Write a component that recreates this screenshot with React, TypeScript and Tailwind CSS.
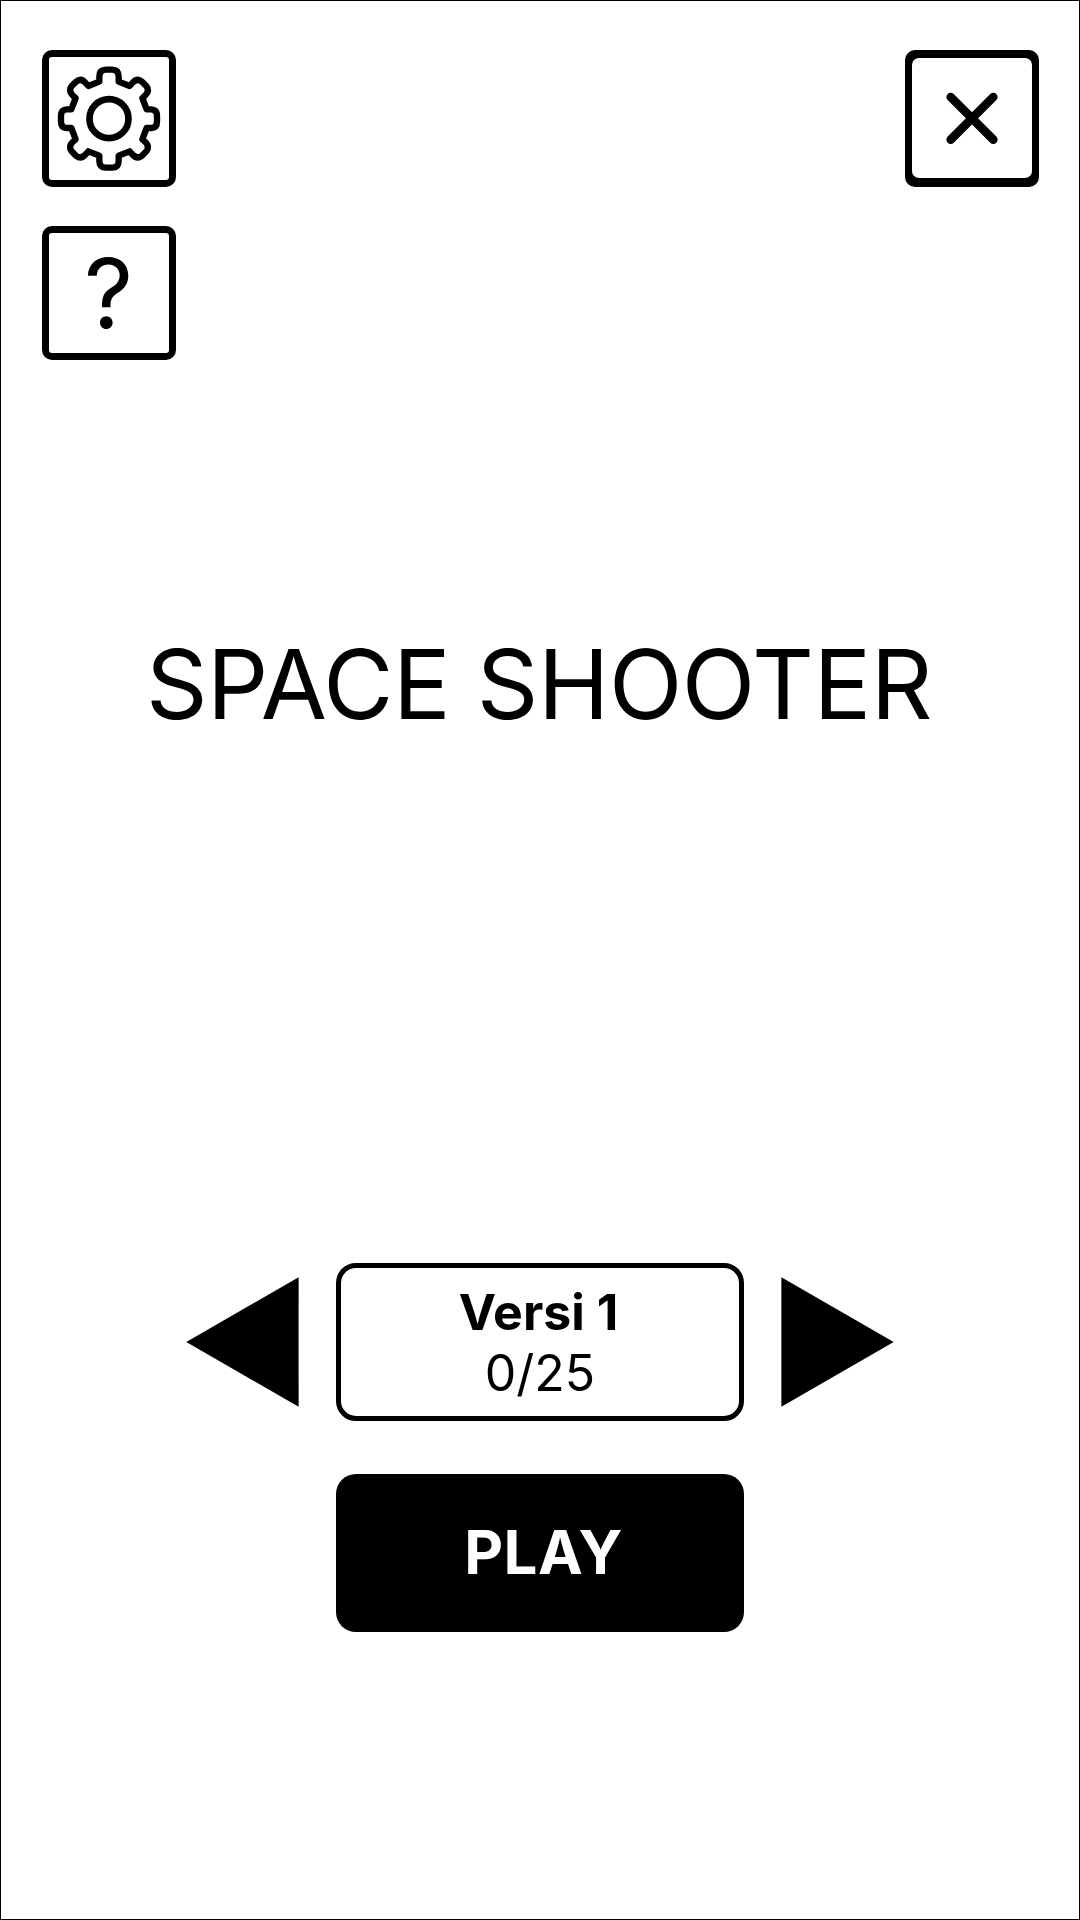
import type { ReactNode } from "react";

function GearIcon() {
  return (
    <svg
      className="h-[106px] w-[106px] shrink-0"
      viewBox="-159 -158 318 318"
      fill="none"
      stroke="black"
      strokeWidth="19"
      strokeLinejoin="round"
    >
      <circle r="58.5" strokeWidth="20" />
      <path d="M-29 -111V-126Q-29 -147 -9 -147H9Q29 -147 29 -126V-111L62 -98L70 -107Q84 -123 99 -111L112 -98Q123 -84 109 -70L100 -62L113 -28H126Q144 -27 144 -9V9Q144 27 126 28H113L100 62L109 70Q123 84 112 98L99 111Q84 123 70 107L62 98L29 111V126Q29 147 9 147H-9Q-29 147 -29 126V111L-62 98L-70 107Q-84 123 -99 111L-112 98Q-123 84 -109 70L-100 62L-113 28H-126Q-144 27 -144 9V-9Q-144 -27 -126 -28H-113L-100 -62L-109 -70Q-123 -84 -112 -98L-99 -111Q-84 -123 -70 -107L-62 -98Z" />
    </svg>
  );
}

function CloseIcon() {
  return (
    <svg className="h-[52px] w-[52px]" viewBox="0 0 52 52" fill="none" stroke="black" strokeWidth="8.6" strokeLinecap="round">
      <path d="M4.7 5L47.3 47.6M47.3 5L4.7 47.6" />
    </svg>
  );
}

function Arrow({ direction }: { direction: "left" | "right" }) {
  return (
    <button aria-label={direction === "left" ? "Previous" : "Next"}>
      <svg className="h-[130px] w-[113px]" viewBox="0 0 113 130">
        <path d={direction === "left" ? "M0.3 65L112.6 0.3V129.7Z" : "M112.7 65L0.4 0.3V129.7Z"} />
      </svg>
    </button>
  );
}

function IconButton({ label, className, children }: { label: string; className: string; children: ReactNode }) {
  return (
    <button aria-label={label} className={`flex w-[134px] justify-center rounded-[10px] ${className}`}>
      {children}
    </button>
  );
}

export default function App() {
  return (
    <main className="flex h-[1920px] w-[1080px] flex-col items-center overflow-hidden border border-black bg-white font-['Inter',sans-serif] text-black">
      <header className="flex w-full items-start justify-between pt-[49px] pr-10 pl-[41px]">
        <div className="flex flex-col gap-[39px]">
          <IconButton label="Settings" className="h-[137px] items-center border-[7px] border-black">
            <GearIcon />
          </IconButton>
          <IconButton label="Help" className="h-[134px] items-center border-[7px] border-black">
            <span className="pr-px text-[96px] leading-[116px]">?</span>
          </IconButton>
        </div>
        <IconButton label="Close" className="h-[137px] items-start bg-black pt-2">
          <span className="flex h-[120px] w-[120px] items-center justify-center rounded-[7px] bg-white">
            <CloseIcon />
          </span>
        </IconButton>
      </header>

      <h1 className="mt-[266px] pr-[2px] text-[96px] leading-[116px] tracking-[-0.45px] whitespace-nowrap">SPACE SHOOTER</h1>

      <section className="mt-[521px] flex items-center gap-[37px]">
        <Arrow direction="left" />
        <div className="flex h-[158px] w-[408px] flex-col items-center justify-center rounded-[20px] border-5 border-black pt-[2px] text-[50px] leading-[61px]">
          <strong className="pr-[3px] font-bold">Versi 1</strong>
          <span>0/25</span>
        </div>
        <Arrow direction="right" />
      </section>

      <button className="mt-[53px] flex h-[158px] w-[408px] items-center justify-center rounded-[20px] bg-black pb-[2px] pl-[7px] text-[60px] leading-[73px] font-bold tracking-[0.4px] text-white">
        PLAY
      </button>
    </main>
  );
}
